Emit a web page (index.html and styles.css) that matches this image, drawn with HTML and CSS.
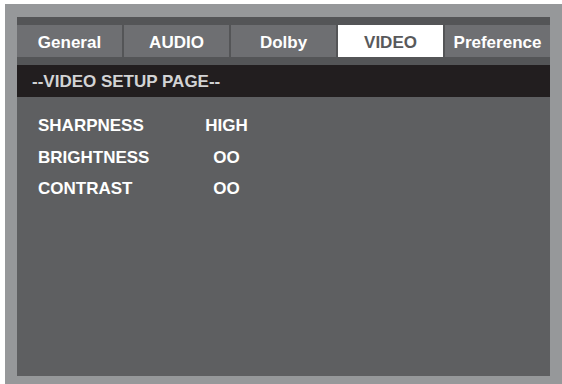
FILE: index.html
```html
<!DOCTYPE html>
<html lang="en">
<head>
  <meta charset="UTF-8" />
  <title>Video Setup</title>
  <link rel="stylesheet" href="styles.css">
</head>
<body>

  <!-- OSD frame -->
  <div class="frame">
    <div class="panel">

      <!-- Tabs -->
      <div class="tabs">
        <div class="tab">General</div>
        <div class="tab">AUDIO</div>
        <div class="tab">Dolby</div>
        <div class="tab active">VIDEO</div>
        <div class="tab">Preference</div>
      </div>

      <div class="title">--VIDEO SETUP PAGE--</div>

      <!-- Settings -->
      <div class="settings">
        <div class="row"><span class="label">SHARPNESS</span><span class="val">HIGH</span></div>
        <div class="row"><span class="label">BRIGHTNESS</span><span class="val">OO</span></div>
        <div class="row"><span class="label">CONTRAST</span><span class="val">OO</span></div>
      </div>

    </div>
  </div>

</body>
</html>
```
FILE: styles.css
```css
body {
  margin: 0;
  background-color: #fff;
  font-family: "Liberation Sans", Arial, sans-serif;
  font-weight: bold;
  font-size: 17px;
}
.frame {
  margin: 4px 0 0 5px;
  height: 380px;
  box-sizing: border-box;
  padding: 13px 12px 8px 12px;
  background-color: #96989a;
}
.panel {
  height: 100%;
  background-color: #5e5f61;
}
.tabs {
  display: flex;
  gap: 2px;
  padding: 8px 0;
  background-color: #545557;
}
.tab {
  flex: 1;
  height: 32px;
  line-height: 35px;
  text-align: center;
  color: #fff;
  background-color: #6e6f72;
}
.tab.active {
  background-color: #fff;
  color: #58595b;
}
.title {
  height: 32px;
  line-height: 34px;
  padding-left: 15px;
  color: #d2d3d4;
  background-color: #221e1f;
}
.settings {
  padding: 13px 0 0 21px;
}
.row {
  display: flex;
  line-height: 31.5px;
  color: #fff;
}
.label {
  width: 167px;
}
.val {
  width: 43px;
  text-align: center;
}
```
